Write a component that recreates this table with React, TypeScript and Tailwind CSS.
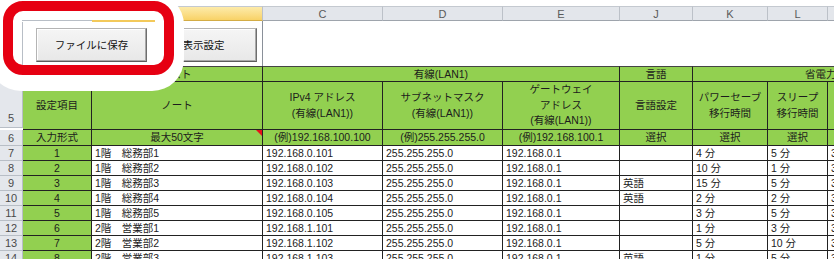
import clsx from 'clsx'
import type { ReactNode } from 'react'

const font = "font-['Liberation_Sans','Noto_Sans_CJK_JP',sans-serif]"

const dataRows = [
  { n: 7, no: '1', note: '1階　総務部1', ip: '192.168.0.101', gw: '192.168.0.1', lang: '', ps: '4 分', sl: '5 分', m: '3 分' },
  { n: 8, no: '2', note: '1階　総務部2', ip: '192.168.0.102', gw: '192.168.0.1', lang: '', ps: '10 分', sl: '1 分', m: '3 分' },
  { n: 9, no: '3', note: '1階　総務部3', ip: '192.168.0.103', gw: '192.168.0.1', lang: '英語', ps: '15 分', sl: '5 分', m: '3 分' },
  { n: 10, no: '4', note: '1階　総務部4', ip: '192.168.0.104', gw: '192.168.0.1', lang: '英語', ps: '2 分', sl: '2 分', m: '3 分' },
  { n: 11, no: '5', note: '1階　総務部5', ip: '192.168.0.105', gw: '192.168.0.1', lang: '', ps: '3 分', sl: '5 分', m: '3 分' },
  { n: 12, no: '6', note: '2階　営業部1', ip: '192.168.1.101', gw: '192.168.0.1', lang: '', ps: '1 分', sl: '3 分', m: '3 分' },
  { n: 13, no: '7', note: '2階　営業部2', ip: '192.168.1.102', gw: '192.168.0.1', lang: '', ps: '5 分', sl: '10 分', m: '3 分' },
  { n: 14, no: '8', note: '2階　営業部3', ip: '192.168.1.103', gw: '192.168.0.1', lang: '英語', ps: '1 分', sl: '5 分', m: '3 分' },
]

function Cell({ children, className }: { children?: ReactNode; className?: string }) {
  return (
    <div className={clsx('flex items-center overflow-hidden whitespace-nowrap border-r border-b border-[#222]', className)}>
      {children}
    </div>
  )
}

function RowHead({ n, className }: { n?: number; className?: string }) {
  return (
    <div className={clsx('flex items-end justify-center border-r border-b border-[#b8bec6] bg-[#e4e7ec] text-[11px] leading-[13px] text-[#4a4a4a]', className)}>
      {n}
    </div>
  )
}

function ColHead({ label, className }: { label?: string; className?: string }) {
  return (
    <div className={clsx('flex h-[15px] items-center justify-center border-t border-r border-b border-t-[#c4c9d0] border-r-[#bcc1c8] border-b-[#9ea4ac] bg-[#e3e6eb] text-[11px] text-[#5a5a5a]', className)}>
      {label}
    </div>
  )
}

function SheetButton({ label, className }: { label: string; className?: string }) {
  return (
    <div
      className={clsx(
        'flex h-[34px] items-center justify-center border border-[#b4b4b4] border-r-[#6e6e6e] border-b-[#5c5c5c] bg-gradient-to-b from-[#f5f5f5] to-[#e8e8e8] text-[10.5px] text-[#111] shadow-[inset_-1px_-1px_0_#a9a9a9,inset_1px_1px_0_#fff]',
        className,
      )}
    >
      {label}
    </div>
  )
}

export default function App() {
  const green = 'bg-[#92d050] justify-center'
  const white = 'bg-white pl-[3px]'

  return (
    <div className={clsx('relative h-[259px] w-[834px] overflow-hidden bg-white text-[10.5px] leading-[14px] text-[#1c1c1c]', font)}>
      <div className="h-[6px]" />
      <div className="grid grid-cols-[23px_69px_171px_120px_120px_117px_73px_75px_60px_60px]">
        {/* column letters */}
        <ColHead className="bg-white" />
        <ColHead label="A" />
        <ColHead label="B" className="border-r-[#8a9099] border-b-[#d3ac45] bg-gradient-to-b from-[#fdeba9] to-[#f8d266]" />
        <ColHead label="C" />
        <ColHead label="D" />
        <ColHead label="E" />
        <ColHead label="J" />
        <ColHead label="K" />
        <ColHead label="L" />
        <ColHead label="M" />

        {/* rows 1-3: buttons */}
        <div className="h-[45px] border-r border-[#b8bec6] bg-white" />
        <div className="col-span-2 border-r border-[#8a9099] pt-[7px] pl-[127px]">
          <SheetButton label="表示設定" className="w-[107px]" />
        </div>
        <div className="col-span-7" />

        {/* row 4 */}
        <RowHead n={4} className="h-[16px] border-t" />
        <Cell className={clsx(green, 'col-span-2 border-t border-t-[#444] pl-[14px]')}>プリンターリスト</Cell>
        <Cell className={clsx(green, 'col-span-3 border-t border-t-[#444]')}>有線(LAN1)</Cell>
        <Cell className={clsx(green, 'border-t border-t-[#444]')}>言語</Cell>
        <Cell className="col-span-3 justify-start border-t border-t-[#444] bg-[#92d050] pl-[112px]">省電力設定</Cell>

        {/* row 5 */}
        <RowHead n={5} className="h-[46px] pb-[2px]" />
        <Cell className={green}>設定項目</Cell>
        <Cell className={green}>ノート</Cell>
        <Cell className={clsx(green, 'flex-col leading-[16px]')}>
          <span>IPv4 アドレス</span>
          <span>(有線(LAN1))</span>
        </Cell>
        <Cell className={clsx(green, 'flex-col leading-[16px]')}>
          <span>サブネットマスク</span>
          <span>(有線(LAN1))</span>
        </Cell>
        <Cell className={clsx(green, 'flex-col leading-[15.5px]')}>
          <span>ゲートウェイ</span>
          <span>アドレス</span>
          <span>(有線(LAN1))</span>
        </Cell>
        <Cell className={green}>言語設定</Cell>
        <Cell className={clsx(green, 'flex-col leading-[16px]')}>
          <span>パワーセーブ</span>
          <span>移行時間</span>
        </Cell>
        <Cell className={clsx(green, 'flex-col leading-[16px]')}>
          <span>スリープ</span>
          <span>移行時間</span>
        </Cell>
        <Cell className={green}>自動</Cell>

        {/* row 6 */}
        <RowHead n={6} className="h-[16px]" />
        <Cell className={green}>入力形式</Cell>
        <Cell className={clsx(green, 'relative')}>
          最大50文字
          <span className="absolute top-0 right-0 border-t-[6px] border-l-[6px] border-t-[#e8101a] border-l-transparent" />
        </Cell>
        <Cell className={green}>(例)192.168.100.100</Cell>
        <Cell className={green}>(例)255.255.255.0</Cell>
        <Cell className={green}>(例)192.168.100.1</Cell>
        <Cell className={green}>選択</Cell>
        <Cell className={green}>選択</Cell>
        <Cell className={green}>選択</Cell>
        <Cell className={green}>選択</Cell>

        {/* data */}
        {dataRows.map((r) => (
          <div key={r.n} className="contents">
            <RowHead n={r.n} className="h-[15px]" />
            <Cell className={green}>{r.no}</Cell>
            <Cell className={white}>{r.note}</Cell>
            <Cell className={white}>{r.ip}</Cell>
            <Cell className={white}>255.255.255.0</Cell>
            <Cell className={white}>{r.gw}</Cell>
            <Cell className={white}>{r.lang}</Cell>
            <Cell className={white}>{r.ps}</Cell>
            <Cell className={white}>{r.sl}</Cell>
            <Cell className={white}>{r.m}</Cell>
          </div>
        ))}
      </div>

      {/* red callout over the save button */}
      <div className="absolute top-[1px] left-[3px] h-[74px] w-[171px] rounded-[20px] border-[10px] border-[#e60012] bg-white shadow-[-2px_4px_0_12px_#fff]">
        <div className="pt-[9px] pl-[9px]">
          <div className="flex h-[2px]">
            <div className="h-px w-[70px] bg-[#b8bec6]" />
            <div className="h-[2px] w-[63px] bg-[#f3c95a]" />
          </div>
          <div className="flex items-start">
            <div className="h-[43px] w-px bg-[#b8bec6]" />
            <SheetButton label="ファイルに保存" className="mt-[6px] ml-[13px] w-[111px]" />
          </div>
        </div>
      </div>
    </div>
  )
}
